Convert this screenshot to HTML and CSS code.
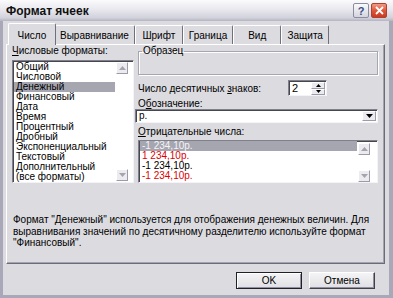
FILE: index.html
```html
<!DOCTYPE html>
<html lang="ru">
<head>
    <meta charset="UTF-8">
    <meta name="viewport" content="width=device-width, initial-scale=1.0">
    <title>Формат ячеек</title>
    <link rel="stylesheet" href="styles.css">
</head>
<body>

    <div class="window">
        <div class="titlebar">
            <span class="title">Формат ячеек</span>
            <div class="caption-buttons">
                <span class="cap-btn help">?</span>
                <span class="cap-btn close">
                    <svg width="9" height="9" viewBox="0 0 9 9"><path d="M1 1 L8 8 M8 1 L1 8" stroke="#fff" stroke-width="1.8" fill="none"/></svg>
                </span>
            </div>
        </div>

        <div class="client">
            <!-- Tabs -->
            <div class="tabs">
                <div class="tab active">Число</div>
                <div class="tab">Выравнивание</div>
                <div class="tab">Шрифт</div>
                <div class="tab">Граница</div>
                <div class="tab">Вид</div>
                <div class="tab">Защита</div>
            </div>

            <div class="panel">
                <div class="columns">
                    <div class="col-left">
                        <div class="label top-label"><u>Ч</u>исловые форматы:</div>
                        <div class="listbox formats">
                            <ul class="items">
                                <li>Общий</li>
                                <li>Числовой</li>
                                <li class="selected">Денежный</li>
                                <li>Финансовый</li>
                                <li>Дата</li>
                                <li>Время</li>
                                <li>Процентный</li>
                                <li>Дробный</li>
                                <li>Экспоненциальный</li>
                                <li>Текстовый</li>
                                <li>Дополнительный</li>
                                <li>(все форматы)</li>
                            </ul>
                            <div class="scrollbar">
                                <span class="arrow"><svg width="7" height="4" viewBox="0 0 7 4"><polygon points="3.5,0 7,4 0,4" fill="#a4a4ae"/></svg></span>
                                <span class="arrow"><svg width="7" height="4" viewBox="0 0 7 4"><polygon points="0,0 7,0 3.5,4" fill="#a4a4ae"/></svg></span>
                            </div>
                        </div>
                    </div>

                    <div class="col-right">
                        <fieldset class="sample">
                            <legend>Образец</legend>
                            <div class="sample-body"></div>
                        </fieldset>

                        <div class="decimals">
                            <span>Число десятичных <u>з</u>наков:</span>
                            <div class="spin">
                                <span class="spin-value">2</span>
                                <div class="spin-buttons">
                                    <span class="spin-btn"><svg width="5" height="3" viewBox="0 0 5 3"><polygon points="2.5,0 5,3 0,3" fill="#000"/></svg></span>
                                    <span class="spin-btn"><svg width="5" height="3" viewBox="0 0 5 3"><polygon points="0,0 5,0 2.5,3" fill="#000"/></svg></span>
                                </div>
                            </div>
                        </div>

                        <div class="label symbol-label">О<u>б</u>означение:</div>
                        <div class="combo">
                            <span class="combo-value">р.</span>
                            <span class="combo-drop"><svg width="7" height="4" viewBox="0 0 7 4"><polygon points="0,0 7,0 3.5,4" fill="#000"/></svg></span>
                        </div>

                        <div class="label negative-label"><u>О</u>трицательные числа:</div>
                        <div class="listbox negatives">
                            <ul class="items">
                                <li class="selected light">-1 234,10р.</li>
                                <li class="red">1 234,10р.</li>
                                <li>-1 234,10р.</li>
                                <li class="red">-1 234,10р.</li>
                            </ul>
                            <div class="scrollbar">
                                <span class="arrow"><svg width="7" height="4" viewBox="0 0 7 4"><polygon points="3.5,0 7,4 0,4" fill="#a4a4ae"/></svg></span>
                                <span class="arrow"><svg width="7" height="4" viewBox="0 0 7 4"><polygon points="0,0 7,0 3.5,4" fill="#a4a4ae"/></svg></span>
                            </div>
                        </div>
                    </div>
                </div>

                <p class="description">Формат "Денежный" используется для отображения денежных величин. Для<br>выравнивания значений по десятичному разделителю используйте формат<br>"Финансовый".</p>
            </div>

            <div class="buttons">
                <button class="btn default">OK</button>
                <button class="btn">Отмена</button>
            </div>
        </div>
    </div>

</body>
</html>
```

FILE: styles.css
```css
body {
    margin: 0;
    background-color: #dcdce0;
    font-family: 'Liberation Sans', Arial, sans-serif;
    font-size: 10px;
    color: #000;
}

.window {
    width: 393px;
    height: 298px;
    background-color: #dcdce0;
}

/* Title bar */
.titlebar {
    height: 21px;
    box-sizing: border-box;
    display: flex;
    align-items: center;
    justify-content: space-between;
    padding: 0 6px;
    background: linear-gradient(#fbfbfd, #e8e8ee 45%, #d2d2dc 85%, #b4b4c2);
}

.title {
    font-size: 12px;
    font-weight: bold;
    color: #111;
}

.caption-buttons {
    display: flex;
    gap: 2px;
}

.cap-btn {
    width: 16px;
    height: 15px;
    box-sizing: border-box;
    display: flex;
    align-items: center;
    justify-content: center;
    border-radius: 2px;
}

.help {
    border: 1px solid #8c8ca0;
    background: linear-gradient(#fafafc, #d4d4de);
    color: #3a4e86;
    font-weight: bold;
    font-size: 11px;
}

.close {
    border: 1px solid #b04030;
    background: linear-gradient(#f09a84, #e0583c 50%, #c83a22);
}

/* Client area */
.client {
    height: 277px;
    box-sizing: border-box;
    border: 3px solid #a8a8b8;
    border-top: none;
    border-right-width: 4px;
    padding: 3px 4px 0 3px;
}

.tabs {
    display: flex;
    align-items: flex-end;
    height: 20px;
    padding-left: 4px;
    position: relative;
    z-index: 1;
}

.tab {
    height: 19px;
    line-height: 20px;
    min-width: 48px;
    box-sizing: border-box;
    padding: 0 5px;
    text-align: center;
    background-color: #dcdce0;
    border: 1px solid;
    border-color: #fff #70707c transparent #fff;
    border-bottom: none;
    border-radius: 2px 2px 0 0;
}

.tab.active {
    height: 22px;
    line-height: 24px;
    margin: 0 -2px -1px;
    position: relative;
}

.panel {
    height: 220px;
    box-sizing: border-box;
    border: 1px solid;
    border-color: #fff #6c6c78 #6c6c78 #fff;
    box-shadow: inset -1px -1px #a4a4b0;
    padding: 0 6px 0 5px;
}

.columns {
    display: flex;
    gap: 4px;
}

.col-left {
    width: 122px;
}

.col-right {
    flex: 1;
}

.label {
    line-height: 10px;
}

.top-label {
    line-height: 12px;
    margin-bottom: 3px;
}

/* List boxes */
.listbox {
    display: flex;
    box-sizing: border-box;
    background-color: #fff;
    border: 1px solid;
    border-color: #80808c #f4f4f8 #f4f4f8 #80808c;
    box-shadow: inset 1px 1px #46464f;
}

.formats {
    height: 123px;
}

.items {
    flex: 1;
    list-style: none;
    margin: 0;
    padding: 1px 0 0 1px;
}

.items li {
    height: 10px;
    line-height: 10px;
    padding-left: 2px;
    white-space: nowrap;
}

.items li.selected {
    background-color: #a6a6b0;
}

.items li.light {
    color: #f4f4f8;
}

.items li.red {
    color: #e00000;
}

.scrollbar {
    width: 15px;
    display: flex;
    flex-direction: column;
    justify-content: space-between;
    padding: 1px 2px 1px 1px;
}

.arrow {
    width: 12px;
    height: 12px;
    box-sizing: border-box;
    display: flex;
    align-items: center;
    justify-content: center;
    background-color: #ececf0;
    border: 1px solid;
    border-color: #fff #9c9ca8 #9c9ca8 #fff;
}

.negatives {
    height: 43px;
    margin-top: 3px;
}

.negatives .items {
    padding-top: 0;
}

.negatives .scrollbar {
    width: 16px;
    padding: 2px 3px 0 1px;
}

/* Sample group */
.sample {
    margin: 0;
    padding: 0 3px;
    min-width: 0;
    border: 1px solid #a6a6b2;
    box-shadow: 1px 1px #fff, inset 1px 1px #fff;
}

.sample legend {
    padding: 0 1px;
    line-height: 12px;
}

.sample-body {
    height: 17px;
}

/* Decimal places */
.decimals {
    display: flex;
    align-items: center;
    height: 16px;
    margin-top: 5px;
}

.spin {
    display: flex;
    width: 39px;
    height: 16px;
    box-sizing: border-box;
    margin-left: auto;
    margin-right: 51px;
    background-color: #fff;
    border: 1px solid;
    border-color: #80808c #f4f4f8 #f4f4f8 #80808c;
    box-shadow: inset 1px 1px #46464f;
}

.spin-value {
    flex: 1;
    padding-left: 3px;
    font-size: 11px;
    line-height: 14px;
}

.spin-buttons {
    display: flex;
    flex-direction: column;
    width: 15px;
    padding: 1px 1px 0 0;
    box-sizing: border-box;
}

.spin-btn {
    flex: 1;
    display: flex;
    align-items: center;
    justify-content: center;
    background-color: #ececf0;
    border: 1px solid;
    border-color: #fff #9c9ca8 #9c9ca8 #fff;
}

/* Currency symbol */
.symbol-label {
    margin-top: 3px;
}

.combo {
    display: flex;
    align-items: stretch;
    height: 14px;
    box-sizing: border-box;
    margin-left: -3px;
    background-color: #fff;
    border: 1px solid;
    border-color: #80808c #f4f4f8 #f4f4f8 #80808c;
    box-shadow: inset 1px 1px #46464f;
}

.combo-value {
    flex: 1;
    padding-left: 3px;
    line-height: 12px;
}

.combo-drop {
    width: 14px;
    margin: 1px 1px 1px 0;
    box-sizing: border-box;
    display: flex;
    align-items: center;
    justify-content: center;
    background-color: #ececf0;
    border: 1px solid;
    border-color: #fff #9c9ca8 #9c9ca8 #fff;
}

.negative-label {
    margin-top: 4px;
}

.description {
    margin: 31px 0 0;
    padding-left: 1px;
    line-height: 11.5px;
}

/* Dialog buttons */
.buttons {
    display: flex;
    justify-content: flex-end;
    gap: 7px;
    margin-top: 8px;
    margin-right: 10px;
}

.btn {
    width: 66px;
    height: 17px;
    padding: 0;
    font-family: inherit;
    font-size: 10px;
    color: #000;
    background: linear-gradient(#f4f4f6, #e0e0e4);
    border: 1px solid;
    border-color: #fff #404048 #404048 #fff;
    box-shadow: inset -1px -1px #9090a0;
}

.btn.default {
    border-color: #202028;
    box-shadow: inset 1px 1px #fff, inset -1px -1px #9090a0;
}
```
